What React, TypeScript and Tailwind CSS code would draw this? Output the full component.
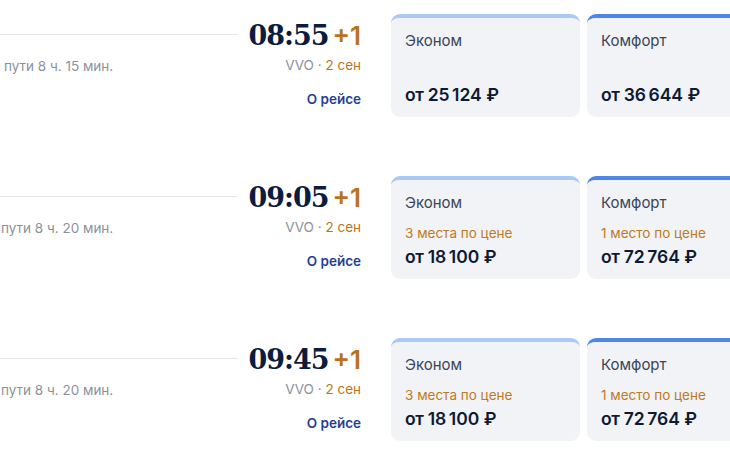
import React from "react";

type Row = {
  time: string;
  duration: string;
  durPad: string;
  econ: { seats?: string; price: string };
  comf: { seats?: string; price: string };
};

const rows: Row[] = [
  {
    time: "08:55",
    duration: "пути 8 ч. 15 мин.",
    durPad: "pl-[4px]",
    econ: { price: "25\u202F124" },
    comf: { price: "36\u202F644" },
  },
  {
    time: "09:05",
    duration: "пути 8 ч. 20 мин.",
    durPad: "pl-[1px]",
    econ: { seats: "3 места по цене", price: "18\u202F100" },
    comf: { seats: "1 место по цене", price: "72\u202F764" },
  },
  {
    time: "09:45",
    duration: "пути 8 ч. 20 мин.",
    durPad: "pl-[1px]",
    econ: { seats: "3 места по цене", price: "18\u202F100" },
    comf: { seats: "1 место по цене", price: "72\u202F764" },
  },
];

function Card({
  title,
  seats,
  price,
  light,
}: {
  title: string;
  seats?: string;
  price: string;
  light: boolean;
}) {
  return (
    <div
      className={
        "w-[189px] h-[103px] shrink-0 rounded-[9px] bg-[#f1f3f6] border-t-[4px] flex flex-col px-[14px] pt-[13px] pb-[10px] " +
        (light ? "border-[#a9c9f7]" : "border-[#4f87e8]")
      }
    >
      <div className="text-[15px] leading-[20px] text-[#3a4558]">{title}</div>
      <div className="flex-1" />
      {seats && (
        <div className="text-[13.5px] leading-[18px] text-[#bf7a22] mb-[3px]">{seats}</div>
      )}
      <div className="text-[17.5px] leading-[24px] font-semibold text-[#0e1a33] tracking-[-0.3px]">
        от {price} ₽
      </div>
    </div>
  );
}

export default function App() {
  return (
    <div
      className="w-[730px] h-[460px] overflow-hidden bg-white pt-[14px] flex flex-col gap-[59px]"
      style={{ fontFamily: "Inter, 'Noto Sans', sans-serif" }}
    >
      {rows.map((r, i) => (
        <div key={i} className="flex items-start h-[103px]">
          <div className="w-[361px] shrink-0 flex items-start">
            <div className="flex-1 flex flex-col pt-[20px]">
              <div className="w-full h-px bg-[#e3e6ea]" />
              <div className={"mt-[22px] text-[13.5px] leading-[18px] text-[#8a919c] " + r.durPad}>
                {r.duration}
              </div>
            </div>
            <div className="ml-[10px] flex flex-col items-end">
              <div className="flex items-baseline mt-[2px]">
                <span
                  className="text-[27px] leading-[40px] font-bold text-[#0b1c3f] tracking-[-1px]"
                  style={{ fontFamily: "'DejaVu Serif', serif" }}
                >
                  {r.time}
                </span>
                <span className="ml-[4px] text-[26px] leading-[40px] font-semibold text-[#b8741c]">+1</span>
              </div>
              <div className="text-[13.5px] leading-[18px] text-[#8a919c]">
                VVO · <span className="text-[#b8741c]">2 сен</span>
              </div>
              <div className="text-[13.5px] leading-[18px] font-semibold text-[#1f3f96] mt-[16px]">
                О рейсе
              </div>
            </div>
          </div>
          <div className="ml-[30px] flex gap-[7px] shrink-0">
            <Card title="Эконом" seats={r.econ.seats} price={r.econ.price} light />
            <Card title="Комфорт" seats={r.comf.seats} price={r.comf.price} light={false} />
          </div>
        </div>
      ))}
    </div>
  );
}
